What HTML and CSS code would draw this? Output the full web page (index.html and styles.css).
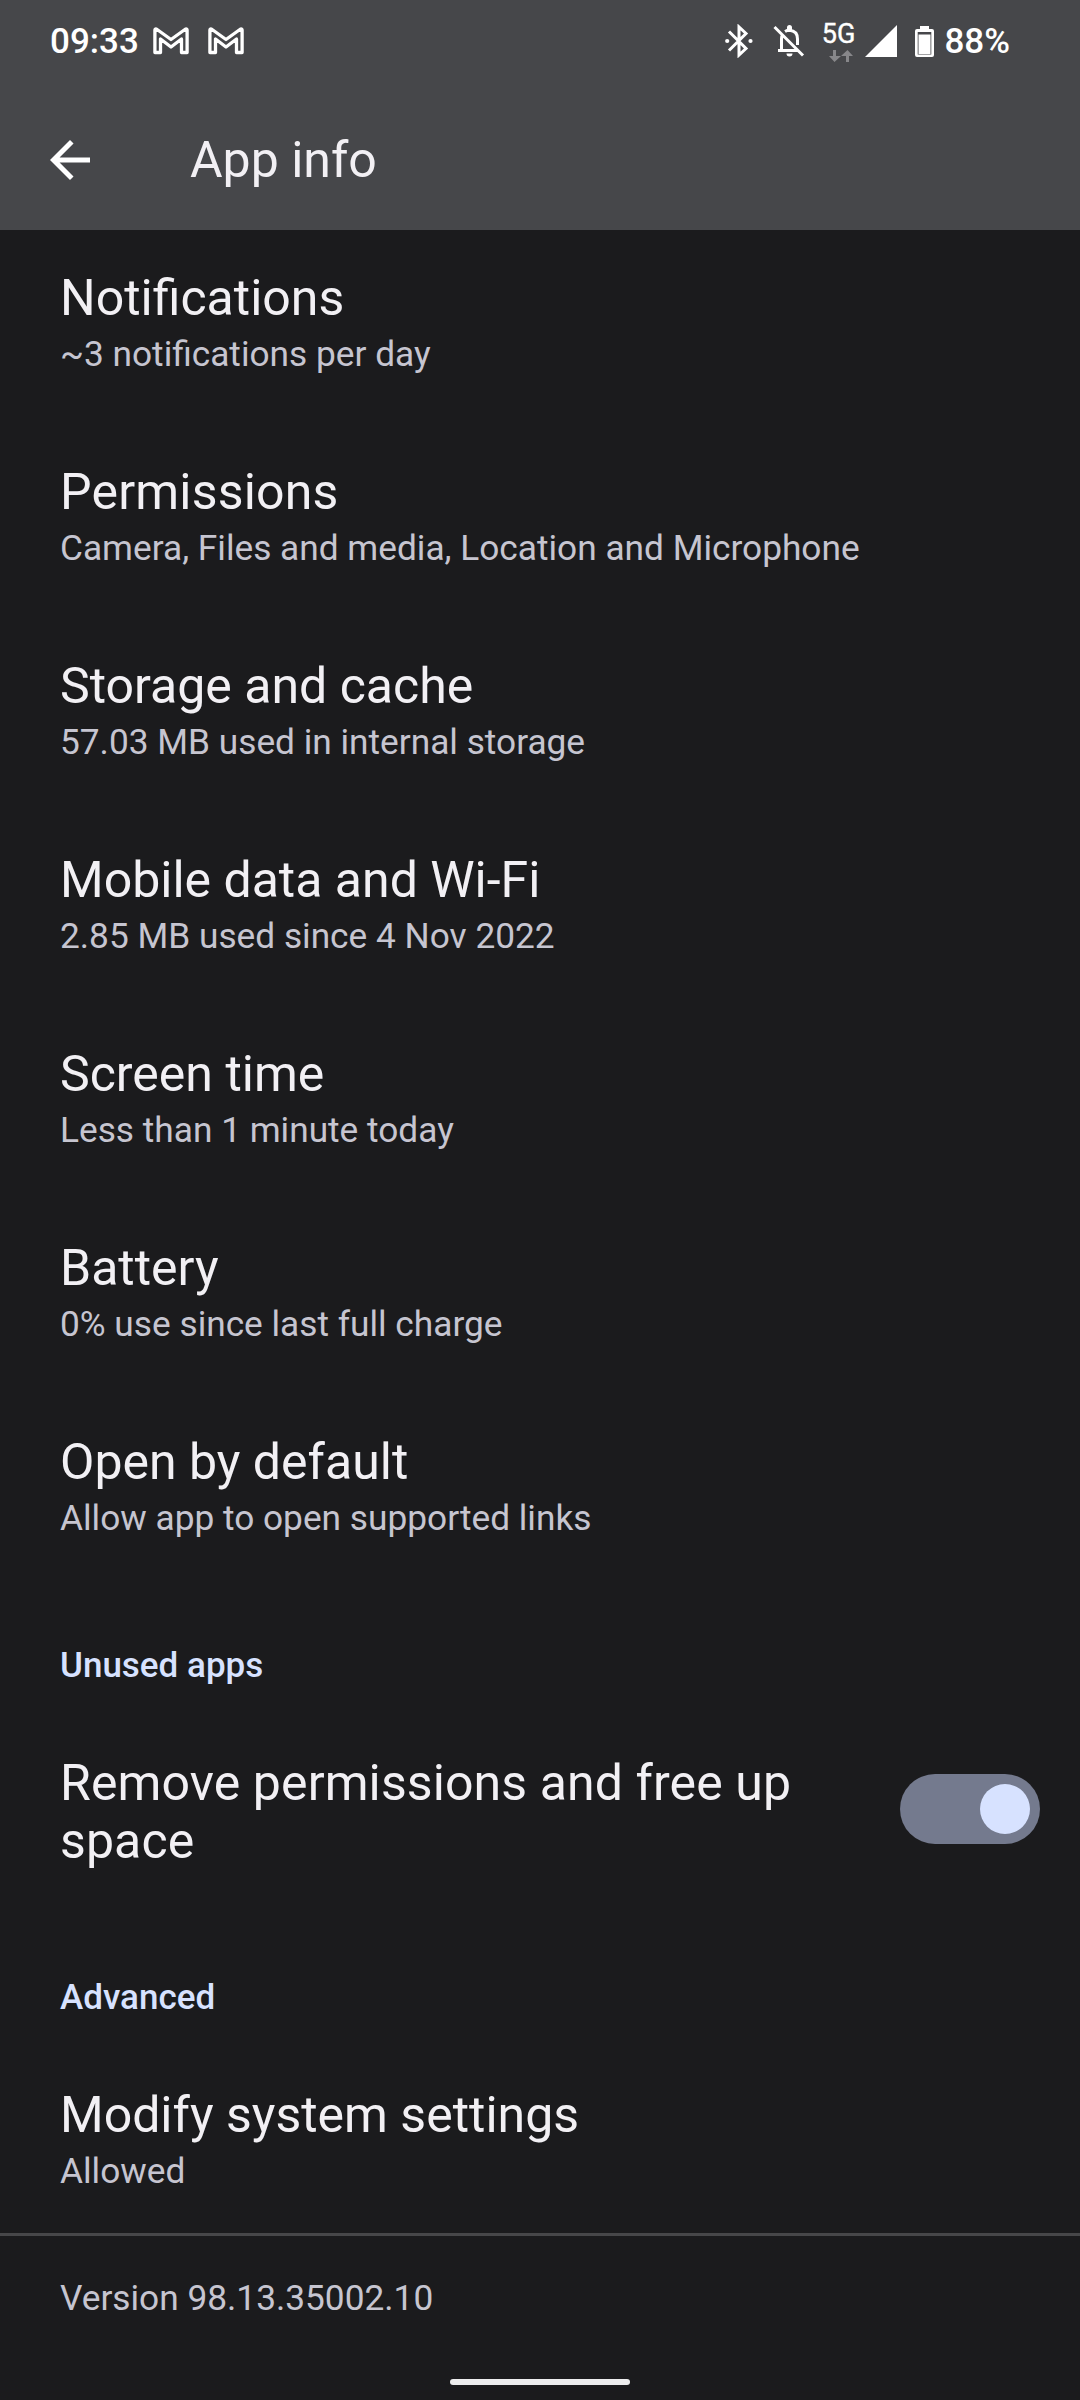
FILE: index.html
```html
<!DOCTYPE html>
<html lang="en-GB">
<head>
<meta charset="utf-8">
<title>App info</title>
<link rel="stylesheet" href="styles.css">
</head>
<body>
<header class="top">
  <div class="status">
    <span class="time">09:33</span>
    <svg class="mail" viewBox="0 0 36 28"><path d="M1.9 25.5V3q0-1.500 1.500-1L18 12.500 32.600 2q1.500-.5 1.500 1v22.500H28.500V12L18 20 7.500 12v13.500z"/></svg>
    <svg class="mail second" viewBox="0 0 36 28"><path d="M1.9 25.5V3q0-1.500 1.500-1L18 12.500 32.600 2q1.500-.5 1.500 1v22.500H28.500V12L18 20 7.500 12v13.500z"/></svg>
    <div class="indicators">
      <svg class="bluetooth" viewBox="0 0 28 34"><path d="M4 7.5L21 24.5 14 31V3l7 6.5L4 26.5" fill="none" stroke="#fff" stroke-width="3"/><circle cx="2.2" cy="17" r="2.1" fill="#fff"/><circle cx="25.5" cy="17" r="2.1" fill="#fff"/></svg>
      <svg class="bell" viewBox="0 0 32 32"><g fill="none" stroke="#fff" stroke-width="3"><path d="M1.5 2L30 30.5M5 25.6h20M8.500 26V14q0-3 1.500-5M12 6.500q2-1.200 4.500-1.200 8 .7 8 8.700v6"/></g><path fill="#fff" d="M14 5V2.500q0-2.500 2.500-2.500t2.500 2.500V5zM13.500 28.500h6q0 3-3 3t-3-3z"/></svg>
      <div class="network"><span>5G</span><svg class="arrows" viewBox="0 0 24 12"><path fill="#87878a" d="M4 0h3v6h5l-6.500 6L0 6h4zM17 12V6h-5l6.500-6L24 6h-4v6z"/></svg></div>
      <svg class="signal" viewBox="0 0 32 32"><path fill="#fff" d="M0 32L32 0v32z"/></svg>
      <svg class="battery" viewBox="0 0 19 31"><path fill="#fff" fill-rule="evenodd" d="M5 0h9v3h3q2 0 2 2v24q0 2-2 2H2q-2 0-2-2V5q0-2 2-2h3zM2.700 6v22.500h13.600V6z"/><path fill="#fff" d="M3.500 8.500h12v19.500h-12z"/></svg>
      <span class="percent">88%</span>
    </div>
  </div>
  <div class="toolbar">
    <svg class="back" viewBox="4 4 16 16"><path fill="#fff" d="M20 11H7.830l5.590-5.590L12 4l-8 8 8 8 1.410-1.410L7.830 13H20z"/></svg>
    <h1>App info</h1>
  </div>
</header>
<main>
  <section class="item"><h2>Notifications</h2><p>~3 notifications per day</p></section>
  <section class="item"><h2 class="spaced">Permissions</h2><p>Camera, Files and media, Location and Microphone</p></section>
  <section class="item"><h2>Storage and cache</h2><p>57.03 MB used in internal storage</p></section>
  <section class="item"><h2>Mobile data and Wi-Fi</h2><p>2.85 MB used since 4 Nov 2022</p></section>
  <section class="item"><h2>Screen time</h2><p>Less than 1 minute today</p></section>
  <section class="item"><h2>Battery</h2><p>0% use since last full charge</p></section>
  <section class="item"><h2>Open by default</h2><p>Allow app to open supported links</p></section>
  <h3 class="unused">Unused apps</h3>
  <section class="remove"><h2>Remove permissions and free up space</h2><div class="switch"><div class="thumb"></div></div></section>
  <h3 class="advanced">Advanced</h3>
  <section class="item modify"><h2>Modify system settings</h2><p>Allowed</p></section>
</main>
<footer><p>Version 98.13.35002.10</p><div class="handle"></div></footer>
</body>
</html>
```
FILE: styles.css
```css
* { box-sizing: border-box; }
body { margin: 0; width: 1080px; height: 2400px; background: #1b1b1d; color: #f2f0f4; font-family: Roboto, sans-serif; overflow: hidden; }
h1, h2, h3, p { margin: 0; font-weight: 400; }
svg { display: block; flex: none; }
.top { height: 230px; background: #46474a; }
.status { height: 82px; display: flex; align-items: center; padding: 0 70px 0 50px; font-size: 35px; font-weight: 500; color: #fff; }
.mail { width: 36px; height: 28px; margin-left: 14px; }
.mail path { fill: none; stroke: #fff; stroke-width: 3.3; stroke-linejoin: round; }
.second { margin-left: 19px; }
.indicators { margin-left: auto; display: flex; align-items: center; }
.bluetooth { width: 28px; height: 34px; }
.bell { width: 32px; height: 32px; margin-left: 20px; }
.network { width: 34px; margin-left: 16px; display: flex; flex-direction: column; align-items: flex-end; font-size: 27px; line-height: 28px; font-weight: 400; -webkit-text-stroke: .4px #fff; }
.arrows { width: 24px; height: 12px; margin: 2px 2px 0 0; }
.signal { width: 32px; height: 32px; margin-left: 10px; }
.battery { width: 19px; height: 31px; margin-left: 18px; }
.percent { margin-left: 10px; }
.toolbar { height: 148px; padding: 8px 0 0 50px; display: flex; align-items: center; }
.back { width: 40px; height: 40px; }
h1 { font-size: 50px; margin-left: 100px; }
main { height: 2003px; padding-top: 36px; }
.item { height: 194px; padding-left: 60px; }
h2 { font-size: 50px; line-height: 64px; }
.spaced { letter-spacing: .2px; }
.item p { font-size: 35.25px; line-height: 48px; color: #c6c5d0; }
h3 { padding-left: 60px; font-size: 35px; font-weight: 500; line-height: 48px; color: #d7e2ff; }
.unused { margin-top: 18px; }
.remove { display: flex; padding: 0 40px 0 60px; margin-top: 64px; height: 116px; justify-content: space-between; align-items: flex-start; }
.remove h2 { width: 760px; line-height: 58px; letter-spacing: .1px; }
.switch { width: 140px; height: 70px; margin-top: 20px; border-radius: 35px; background: #747a8e; padding: 10px; display: flex; justify-content: flex-end; }
.thumb { width: 50px; height: 50px; border-radius: 50%; background: #d7e2ff; }
.advanced { margin-top: 104px; }
.modify { margin-top: 61px; height: 150px; }
footer { height: 167px; border-top: 3px solid #474749; padding: 42px 0 0 60px; color: #c6c5d0; font-size: 35.25px; line-height: 41px; }
.handle { width: 180px; height: 6px; border-radius: 3px; background: #ededee; margin: 60px 0 0 390px; }
```
